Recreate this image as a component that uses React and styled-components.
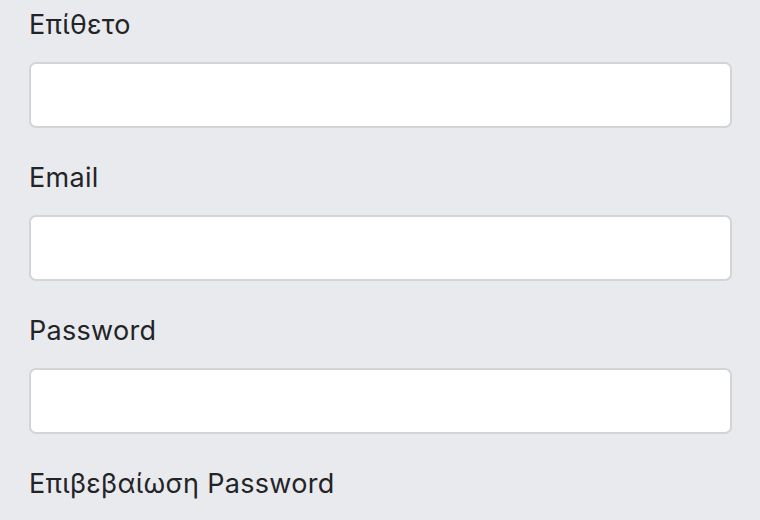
import styled, { createGlobalStyle } from "styled-components";

const GlobalStyle = createGlobalStyle`
  html, body {
    margin: 0;
    padding: 0;
    background: #e9eaee;
  }
  body {
    font-family: Inter, "Noto Sans", sans-serif;
    overflow: hidden;
  }
`;

const Form = styled.form`
  padding: 9px 28px 0 29px;
  display: flex;
  flex-direction: column;
  gap: 34px;
`;

const Field = styled.div`
  display: flex;
  flex-direction: column;
  gap: 21px;
`;

const Label = styled.label`
  font-size: 27px;
  line-height: 32px;
  color: #232427;
  letter-spacing: 0.3px;
`;

const Input = styled.input`
  box-sizing: border-box;
  width: 703px;
  height: 66px;
  border: 2px solid #d3d4d8;
  border-radius: 7px;
  background: #ffffff;
  font-size: 26px;
  padding: 0 16px;
  outline: none;
`;

const fields = [
  { id: "surname", label: "Επίθετο", type: "text" },
  { id: "email", label: "Email", type: "email" },
  { id: "password", label: "Password", type: "password" },
  { id: "confirm", label: "Επιβεβαίωση Password", type: "password" },
];

export default function App() {
  return (
    <>
      <GlobalStyle />
      <Form>
        {fields.map((f) => (
          <Field key={f.id}>
            <Label htmlFor={f.id}>{f.label}</Label>
            <Input id={f.id} type={f.type} />
          </Field>
        ))}
      </Form>
    </>
  );
}
